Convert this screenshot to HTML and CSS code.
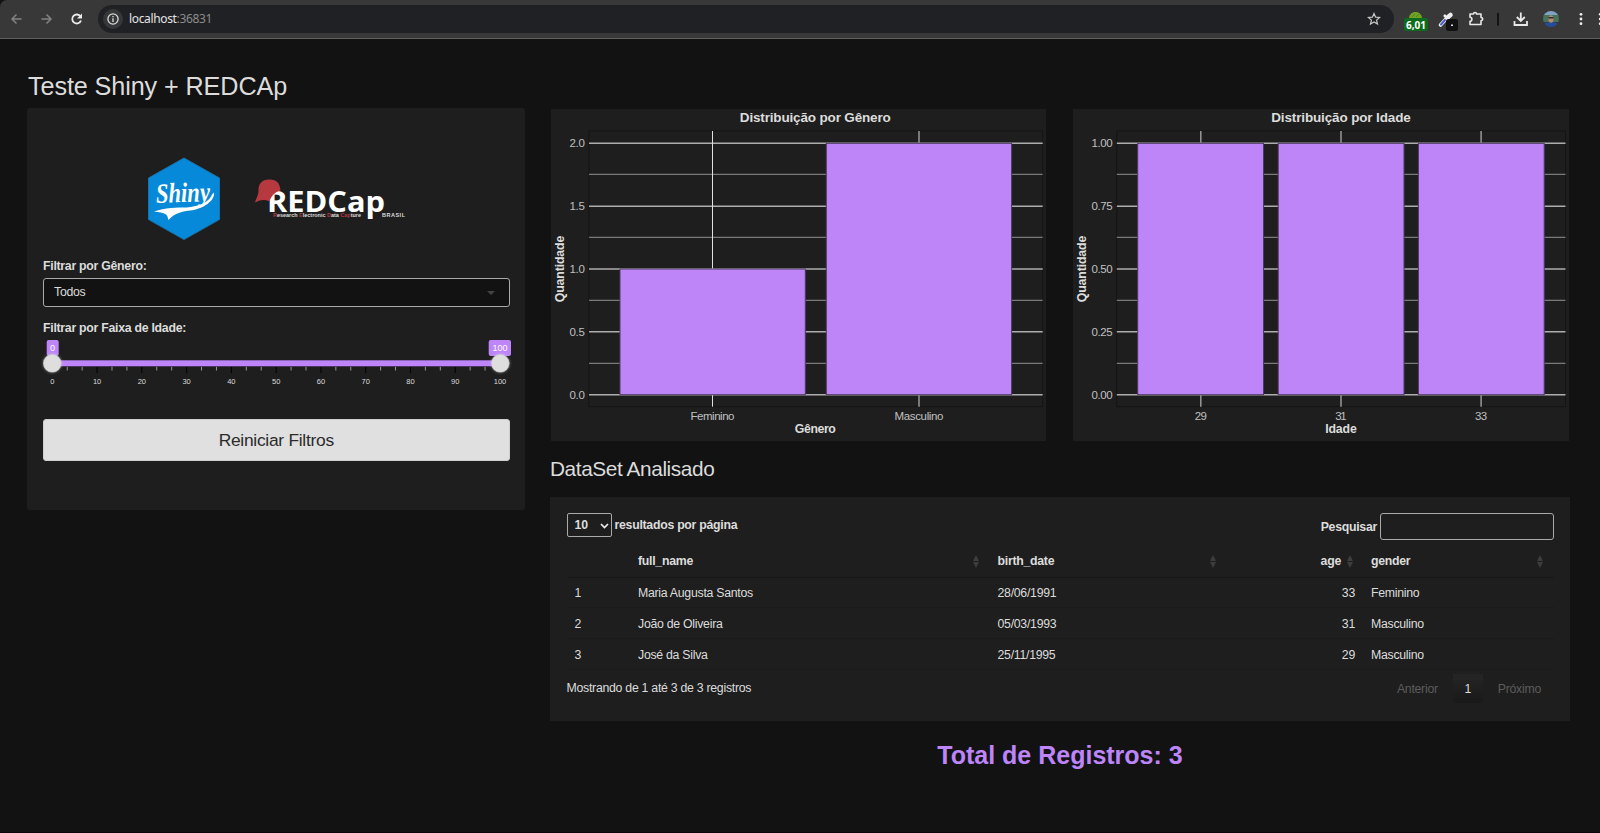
FILE: index.html
```html
<!DOCTYPE html>
<html lang="pt-BR">
<head>
<meta charset="utf-8">
<title>Teste Shiny + REDCAp</title>
<link rel="stylesheet" href="styles.css">
</head>
<body>
<header class="toolbar">
  <svg class="nav" width="96" height="38" viewBox="0 0 96 38" fill="none" stroke-width="1.5">
    <path stroke="#828282" d="M21.500 19H12.500M16.500 14.500L12 19L16.500 23.500"/>
    <path stroke="#828282" d="M41.500 19H50.500M46.500 14.500L51 19L46.500 23.500"/>
    <path stroke="#ececec" stroke-width="1.800" d="M80.500 16.500A4.500 4.500 0 1 0 81 20.500"/>
    <path fill="#ececec" d="M82 13.500V18.500H77Z"/>
  </svg>
  <div class="address">
    <span class="info"><svg width="12" height="12" viewBox="0 0 12 12" fill="none" stroke="#dcdcdc" stroke-width="1.300"><circle cx="6" cy="6" r="5.100"/><path d="M6 5.300V9M6 3V4.300"/></svg></span>
    <span class="url">localhost<span class="port">:36831</span></span>
    <svg class="star" width="14" height="14" viewBox="0 0 14 14" fill="none" stroke="#c8c8c8" stroke-width="1.200"><path d="M7 1.500L8.600 5.200L12.600 5.500L9.600 8.100L10.500 12L7 9.900L3.500 12L4.400 8.100L1.400 5.500L5.400 5.200Z"/></svg>
  </div>
  <svg class="tools" width="206" height="38" viewBox="0 0 206 38" fill="none">
    <path fill="#6fa321" d="M15 18.500C15 14.500 18 12 21.500 12S28 14.500 28 18.500Z"/>
    <path stroke="#4f8420" d="M18 17L21 14M22 17L25 14"/>
    <rect x="10" y="18" width="24" height="13" rx="2" fill="#0c6b1c"/>
    <text x="22" y="28.500" text-anchor="middle" textLength="20" lengthAdjust="spacingAndGlyphs" class="badge">6,01</text>
    <path stroke="#eee" stroke-width="3.600" stroke-linecap="round" d="M46.500 25L52 19"/>
    <path stroke="#4a5cc9" stroke-width="2" stroke-linecap="round" d="M47 24.500L51 20"/>
    <path stroke="#eee" stroke-width="2.500" d="M50 15L56 21"/>
    <path stroke="#eee" stroke-width="4.500" stroke-linecap="round" d="M54 17L56.500 15"/>
    <rect x="52" y="19" width="12" height="12" rx="2.500" fill="#111"/>
    <rect x="57" y="24.500" width="2" height="1.500" fill="#ddd"/>
    <path stroke="#e8e8e8" stroke-width="1.600" stroke-linejoin="round" d="M76 14H79.500C79.500 12 82.500 12 82.500 14H87V17.500C89.300 17.500 89.300 20.700 87 20.700V24.500H76V21.200C78.500 21.200 78.500 17.200 76 17.200Z"/>
    <path stroke="#0c0c0c" stroke-width="1.600" d="M104 13V25.500"/>
    <path stroke="#e8e8e8" stroke-width="1.800" d="M126.800 12.500V20.500M122.800 17L126.800 21L130.800 17M120.500 21V25H133V21"/>
    <clipPath id="face"><circle cx="157" cy="19" r="8"/></clipPath>
    <g clip-path="url(#face)"><path fill="#7fa3c4" d="M149 11h16v5h-16z"/><path fill="#47735a" d="M149 15h16v7h-16z"/><path fill="#234d9c" d="M149 24Q157 20 165 24V28H149Z"/><ellipse cx="157" cy="19" rx="2.500" ry="3.800" fill="#b98873"/><path fill="#302b31" d="M154.500 17h5v1.500h-5z"/></g>
    <g fill="#eee"><circle cx="187" cy="14.300" r="1.400"/><circle cx="187" cy="19" r="1.400"/><circle cx="187" cy="23.700" r="1.400"/><circle cx="206" cy="14.300" r="1.200"/><circle cx="206" cy="19" r="1.200"/><circle cx="206" cy="23.700" r="1.200"/></g>
  </svg>
</header>

<main class="page">
  <h1 class="title">Teste Shiny + REDCAp</h1>
  <div class="columns">
    <aside class="sidebar">
      <div class="logos">
        <svg width="74" height="84" viewBox="0 0 74 84">
          <path fill="#0689d8" stroke="#1873ad" stroke-width="1" d="M37 1L72.500 21V62.500L37 82.500L1.500 62.500V21Z"/>
          <text class="script" x="9" y="45" textLength="54" lengthAdjust="spacingAndGlyphs" transform="rotate(-2 37 40)">Shiny</text>
          <path fill="#fff" d="M67 35.500C68 44 56 52 43 53.500C32 54.500 26 58 21.500 63C20.500 61 21 59 19 57.500C16 55.500 12 55 7 54.500C18 50.500 30 50.500 40 50.500C54 49 63 44 65 37.500Z"/>
        </svg>
        <svg width="154" height="44" viewBox="0 0 154 44">
          <text class="redcap" x="12" y="34.500" textLength="118" lengthAdjust="spacingAndGlyphs">REDCap</text>
          <path fill="#b5393f" d="M3.500 14C3 7 7.500 2.500 13.500 2.500C21 2 25 5.500 25.500 13.500C20 15 16 19 14.500 24.500C10 22.500 6 22.500 .500 25.500C-.8 25 3.500 19 3.500 14Z"/>
          <text class="tagline" x="18" y="40" textLength="88" lengthAdjust="spacingAndGlyphs"><tspan class="red">R</tspan>esearch <tspan class="red">E</tspan>lectronic <tspan class="red">D</tspan>ata <tspan class="red">Cap</tspan>ture</text>
          <text class="brasil" x="127" y="40" textLength="23">BRASIL</text>
        </svg>
      </div>
      <label class="label">Filtrar por Gênero:</label>
      <div class="select"><span>Todos</span><span class="caret"></span></div>
      <label class="label">Filtrar por Faixa de Idade:</label>
      <svg class="slider" width="476" height="50" viewBox="0 0 476 50">
        <rect x="10" y="21" width="450" height="7" fill="#1a1420"/>
        <rect x="10" y="21.300" width="450" height="6" fill="#bd85f8"/>
        <g id="ticks"></g>
        <rect x="7.700" y="1" width="12" height="16" rx="2" fill="#bd85f8"/>
        <rect x="449.700" y="1" width="22.300" height="16" rx="2" fill="#bd85f8"/>
        <text class="tag" x="13.500" y="12" text-anchor="middle">0</text>
        <text class="tag" x="461" y="12" text-anchor="middle">100</text>
        <circle class="handle" cx="13.300" cy="24.300" r="9"/>
        <circle class="handle" cx="461.300" cy="24.300" r="9"/>
      </svg>
      <button class="reset">Reiniciar Filtros</button>
    </aside>

    <section class="content">
      <div class="charts">
        <svg class="chart" id="genero" width="495" height="332" viewBox="0 0 495 332"></svg>
        <svg class="chart" id="idade" width="496" height="332" viewBox="0 0 496 332"></svg>
      </div>
      <h2 class="subtitle">DataSet Analisado</h2>
      <div class="panel">
        <div class="controls">
          <div class="length"><span class="count">10<svg width="9" height="6" viewBox="0 0 9 6" fill="none" stroke="#eee" stroke-width="1.700"><path d="M1 1L4.500 4.500L8 1"/></svg></span><span>resultados por página</span></div>
          <div class="search"><span>Pesquisar</span><input class="field" type="text"></div>
        </div>
        <table class="data">
          <colgroup><col class="c1"><col class="c2"><col class="c3"><col class="c4"><col class="c5"></colgroup>
          <thead><tr><th></th>
            <th><div class="head">full_name<span class="sort"></span></div></th>
            <th><div class="head">birth_date<span class="sort"></span></div></th>
            <th><div class="head end">age<span class="sort"></span></div></th>
            <th><div class="head">gender<span class="sort"></span></div></th></tr></thead>
          <tbody>
            <tr><td>1</td><td>Maria Augusta Santos</td><td>28/06/1991</td><td class="num">33</td><td>Feminino</td></tr>
            <tr><td>2</td><td>João de Oliveira</td><td>05/03/1993</td><td class="num">31</td><td>Masculino</td></tr>
            <tr><td>3</td><td>José da Silva</td><td>25/11/1995</td><td class="num">29</td><td>Masculino</td></tr>
          </tbody>
        </table>
        <div class="footer">
          <span class="summary">Mostrando de 1 até 3 de 3 registros</span>
          <div class="pager"><span>Anterior</span><span class="current">1</span><span>Próximo</span></div>
        </div>
      </div>
      <div class="total">Total de Registros: 3</div>
    </section>
  </div>
</main>
<script src="charts.js"></script>
</body>
</html>
```
FILE: styles.css
```css
* { box-sizing: border-box; }
body { margin: 0; height: 833px; overflow: hidden; background: #121212; color: #dcdcdc; font: 12.3px/17.4px "Liberation Sans", Arial, sans-serif; letter-spacing: -.27px; border-bottom: 1px solid #0a0508; }
svg { display: block; flex: none; letter-spacing: 0; }
.toolbar { display: flex; align-items: center; height: 39px; background: #383838; border-bottom: 1px solid #606060; border-top-left-radius: 7px; }
.nav { margin-right: 2px; }
.address { display: flex; align-items: center; width: 1296px; height: 28px; padding: 0 13px 0 5px; border-radius: 14px; background: #202124; }
.info { display: flex; align-items: center; justify-content: center; width: 20px; height: 20px; margin-right: 6px; border-radius: 50%; background: #363739; }
.url { flex: 1; font: 12px/16px "Noto Sans", sans-serif; letter-spacing: -.35px; color: #e4e4e4; }
.port { color: #8c8c8c; }
.badge { font: bold 11px "Noto Sans", sans-serif; fill: #fff; }

.page { padding: 32px 30px 0 27px; }
.title { margin: 0; height: 37px; padding-left: 1px; font-size: 25.200px; line-height: 30px; font-weight: 400; letter-spacing: -.1px; }
.columns { display: flex; align-items: flex-start; gap: 25px; }
.sidebar { width: 498px; height: 402px; padding: 49px 15.500px 0 16px; border-radius: 3px; background: #1e1e1e; }
.logos { display: flex; align-items: center; gap: 34px; height: 84px; margin: 0 0 17px 104px; }
.script { font: italic bold 28px "Liberation Serif", serif; fill: #fff; }
.redcap { font: bold 29px "Open Sans", sans-serif; fill: #fff; }
.tagline { font: bold 5.500px "Liberation Sans", sans-serif; fill: #ddd; }
.red { fill: #b5393f; }
.brasil { font: bold 5.500px "Liberation Sans", sans-serif; fill: #ddd; }
.label { display: block; height: 20px; font-weight: 700; }
.select { display: flex; align-items: center; justify-content: space-between; height: 29px; margin-bottom: 13px; padding: 1px 14px 0 10px; border: 1px solid #aaa; border-radius: 3px; background: #121212; }
.caret { border: 4px solid transparent; border-top-color: #444; border-bottom: 0; }
.slider { margin: -1px 0 0 -4px; overflow: visible; }
.tag { font: 9px "Liberation Sans", sans-serif; fill: #fff; }
.handle { fill: #dedede; stroke: #bbb; stroke-width: .5; filter: drop-shadow(0 0 1.500px rgba(255,255,255,.4)); }
.tick { font: 7.500px "Liberation Sans", sans-serif; fill: #dcdcdc; }
.reset { display: block; width: 100%; height: 42px; margin-top: 30px; padding: 0; border: 1px solid #cfcfcf; border-radius: 3px; background: #e0e0e0; color: #2b2b2b; font: 17.400px/20px "Liberation Sans", Arial, sans-serif; letter-spacing: -.27px; }

.content { width: 1020px; }
.charts { display: flex; gap: 27px; padding: 1px 0 0 1px; }
.chart { background: #1e1e1e; }
.chart-title { font: bold 13.500px "Liberation Sans", sans-serif; fill: #dcdcdc; }
.axis-title { font: bold 12.300px "Liberation Sans", sans-serif; fill: #dcdcdc; }
.axis-text { font: 11.500px "Liberation Sans", sans-serif; fill: #c0c0c0; }
.subtitle { margin: 16px 0 17px; font-size: 20.800px; line-height: 23px; font-weight: 400; letter-spacing: -.4px; }
.panel { height: 224px; padding: 16px 16.500px; background: #1e1e1e; }
.controls { display: flex; justify-content: space-between; height: 32px; font-weight: 700; }
.length { display: flex; align-items: center; gap: 3px; height: 24px; }
.count { display: flex; align-items: center; justify-content: space-between; width: 45px; height: 24px; padding: 0 2px 0 7px; border: 1px solid #aaa; border-radius: 2px; letter-spacing: 0; }
.length > span { padding-top: 1px; }
.search { display: flex; align-items: center; gap: 3px; height: 27px; }
.search span { padding-top: 2px; }
.field { width: 173.500px; height: 27px; border: 1px solid #aaa; border-radius: 3px; background: transparent; color: inherit; }
.data { width: 987px; table-layout: fixed; border-collapse: separate; border-spacing: 0; }
.c1 { width: 63.500px; }
.c2 { width: 359.500px; }
.c3 { width: 237px; }
.c4 { width: 136.500px; }
.data th { height: 32.500px; padding: 1px 10px 0 8px; border-bottom: 1px solid #171717; text-align: left; }
.data td { height: 30.900px; padding: 3px 8px 0; border-bottom: 1px solid #1a1a1a; }
.data .num { text-align: right; }
.head { display: flex; align-items: center; justify-content: space-between; }
.end { justify-content: flex-end; gap: 6px; margin-right: -1px; }
.sort { display: flex; flex-direction: column; gap: 1px; margin-right: 1px; }
.sort::before, .sort::after { content: ""; border: 3px solid transparent; }
.sort::before { border-top: 0; border-bottom: 6px solid #3d3d3d; }
.sort::after { border-bottom: 0; border-top: 6px solid #3d3d3d; }
.footer { display: flex; justify-content: space-between; padding-top: 4px; }
.summary { padding-top: 6px; }
.pager { display: flex; gap: 15px; height: 29px; padding-right: 12.500px; line-height: 30px; color: #5c5c5c; }
.current { width: 30px; text-align: center; color: #ddd; background: linear-gradient(#252525, #191919); }
.total { margin-top: 19px; text-align: center; font-size: 25px; line-height: 30px; font-weight: 700; letter-spacing: 0; color: #bd85f8; }
```
FILE: charts.js
```js
const yPos = [285.7, 254.3, 222.7, 191.3, 160, 128.3, 97.3, 65.3, 34.3];

function line(x1, y1, x2, y2, color, width) {
  return `<path d="M${x1} ${y1}L${x2} ${y2}" stroke="${color}" stroke-width="${width}"/>`;
}

function drawChart(id, c) {
  let s = `<rect x="${c.left}" y="22" width="${c.right - c.left}" height="275.7" fill="#1e1e1e" stroke="#121212" stroke-width=".8"/>`;
  yPos.forEach((y, i) => { s += line(c.left, y, c.right, y, i % 2 ? '#909090' : '#adadad', i % 2 ? 1 : 1.4); });
  c.bars.forEach(b => {
    s += line(b.mid, 22, b.mid, 297.7, b.bright ? '#e0e0e0' : '#999', b.bright ? 1 : 1.5);
    s += `<rect x="${b.x}" y="${b.top}" width="${b.w}" height="${285.7 - b.top}" fill="#bd85f8" stroke="#4d3a61" stroke-width="1"/>`;
    s += `<text class="axis-text" x="${b.mid}" y="311" text-anchor="middle" textLength="${b.len}">${b.name}</text>`;
  });
  c.labels.forEach((t, i) => {
    s += `<text class="axis-text" x="${c.left - 4.2}" y="${yPos[i * 2] + 4}" text-anchor="end" textLength="${c.labelLen}">${t}</text>`;
  });
  s += `<text class="chart-title" x="${c.center}" y="13.4" text-anchor="middle" textLength="${c.titleLen}">${c.title}</text>`;
  s += `<text class="axis-title" x="${c.center}" y="324.4" text-anchor="middle" textLength="${c.axisLen}">${c.axis}</text>`;
  s += `<text class="axis-title" transform="translate(13 160) rotate(-90)" text-anchor="middle" textLength="66.5">Quantidade</text>`;
  document.getElementById(id).innerHTML = s;
}

drawChart('genero', {
  left: 38, right: 491.7, center: 264.3, title: 'Distribuição por Gênero', titleLen: 151, axis: 'Gênero', axisLen: 41,
  labels: ['0.0', '0.5', '1.0', '1.5', '2.0'], labelLen: 15.3,
  bars: [
    { x: 69, w: 185.3, mid: 161.5, top: 160, name: 'Feminino', len: 44, bright: true },
    { x: 275.3, w: 185.3, mid: 368, top: 34.3, name: 'Masculino', len: 49 }
  ]
});
drawChart('idade', {
  left: 43.8, right: 492.5, center: 268, title: 'Distribuição por Idade', titleLen: 139.5, axis: 'Idade', axisLen: 31.5,
  labels: ['0.00', '0.25', '0.50', '0.75', '1.00'], labelLen: 21,
  bars: [
    { x: 64.7, w: 125.8, mid: 127.8, top: 34.3, name: '29', len: 12 },
    { x: 205.2, w: 125.8, mid: 268, top: 34.3, name: '31', len: 11.5 },
    { x: 345.4, w: 125.8, mid: 408.1, top: 34.3, name: '33', len: 12 }
  ]
});

let ticks = '';
for (let i = 0; i <= 30; i++) {
  const x = 13.3 + i * 44.77 / 3;
  ticks += i % 3 ? line(x, 27.8, x, 31.5, '#999', 1) : line(x, 28, x, 34, '#000', 1);
  if (i % 3 === 0) ticks += `<text class="tick" x="${x}" y="44.5" text-anchor="middle">${i / 3 * 10}</text>`;
}
document.getElementById('ticks').innerHTML = ticks;
```
